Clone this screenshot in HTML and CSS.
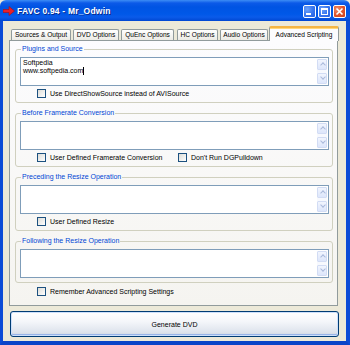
FILE: index.html
```html
<!DOCTYPE html>
<html lang="en">
<head>
  <meta charset="UTF-8">
  <title>FAVC 0.94 - Mr_Odwin</title>
  <link rel="stylesheet" href="styles.css">
</head>
<body>

  <div class="window">

    <!-- Title bar -->
    <div class="titlebar">
      <svg class="app-icon" width="12" height="10" viewBox="0 0 12 10">
        <path d="M0 3.5 H6 V0.5 L11.5 5 L6 9.5 V6.5 H0 Z" fill="#e8202a" stroke="#a80e14" stroke-width="0.6"/>
      </svg>
      <span class="title">FAVC 0.94 - Mr_Odwin</span>
      <div class="caption-buttons">
        <span class="cap cap-min"><i></i></span>
        <span class="cap cap-max"><i></i></span>
        <span class="cap cap-close">
          <svg width="9" height="9" viewBox="0 0 9 9"><path d="M1.5 1.5 L7.5 7.5 M7.5 1.5 L1.5 7.5" stroke="#fff" stroke-width="1.6"/></svg>
        </span>
      </div>
    </div>

    <div class="frame">

      <!-- Tabs -->
      <div class="tabs">
        <div class="tab t-sources">Sources &amp; Output</div>
        <div class="tab t-dvd">DVD Options</div>
        <div class="tab t-quenc">QuEnc Options</div>
        <div class="tab t-hc">HC Options</div>
        <div class="tab t-audio">Audio Options</div>
        <div class="tab active t-adv">Advanced Scripting</div>
      </div>

      <div class="panel">

        <fieldset class="group">
          <legend>Plugins and Source</legend>
          <div class="editbox">
            <div class="edit-text">Softpedia<br>www.softpedia.com<span class="caret"></span></div>
            <div class="vscroll"><span class="sb-btn up"></span><span class="sb-track"></span><span class="sb-btn down"></span></div>
          </div>
          <div class="check-row">
            <label class="check"><span class="box"></span>Use DirectShowSource instead of AVISource</label>
          </div>
        </fieldset>

        <fieldset class="group">
          <legend>Before Framerate Conversion</legend>
          <div class="editbox">
            <div class="edit-text"></div>
            <div class="vscroll"><span class="sb-btn up"></span><span class="sb-track"></span><span class="sb-btn down"></span></div>
          </div>
          <div class="check-row">
            <label class="check first"><span class="box"></span>User Defined Framerate Conversion</label>
            <label class="check"><span class="box"></span>Don't Run DGPulldown</label>
          </div>
        </fieldset>

        <fieldset class="group">
          <legend>Preceding the Resize Operation</legend>
          <div class="editbox">
            <div class="edit-text"></div>
            <div class="vscroll"><span class="sb-btn up"></span><span class="sb-track"></span><span class="sb-btn down"></span></div>
          </div>
          <div class="check-row">
            <label class="check"><span class="box"></span>User Defined Resize</label>
          </div>
        </fieldset>

        <fieldset class="group last">
          <legend>Following the Resize Operation</legend>
          <div class="editbox">
            <div class="edit-text"></div>
            <div class="vscroll"><span class="sb-btn up"></span><span class="sb-track"></span><span class="sb-btn down"></span></div>
          </div>
        </fieldset>

        <div class="check-row remember">
          <label class="check"><span class="box"></span>Remember Advanced Scripting Settings</label>
        </div>

      </div>

      <button class="generate">Generate DVD</button>

    </div>
  </div>

</body>
</html>
```
FILE: styles.css
```css
body {
  margin: 0;
  font-family: "Liberation Sans", Arial, sans-serif;
  font-size: 7px;
  color: #000;
  background: #ece9d8;
}
.window {
  width: 350px;
  height: 345px;
  display: flex;
  flex-direction: column;
  overflow: hidden;
}

/* Title bar */
.titlebar {
  height: 21px;
  flex: none;
  display: flex;
  align-items: center;
  padding-left: 3px;
  background: linear-gradient(to bottom, #3d8df5 0, #0c5ae8 3px, #0054e3 7px, #0058e8 14px, #0a5bea 17px, #0047d2 21px);
  border-radius: 6px 6px 0 0;
}
.app-icon {
  margin-right: 2px;
  margin-top: 1px;
}
.title {
  color: #fff;
  font-size: 8.5px;
  font-weight: bold;
  letter-spacing: 0.2px;
  text-shadow: 1px 1px 0 #0a2a8c;
}
.caption-buttons {
  margin-left: auto;
  margin-right: 4px;
  display: flex;
  gap: 2px;
  margin-top: 1px;
}
.cap {
  width: 11px;
  height: 11px;
  border: 1px solid #fff;
  border-radius: 2px;
  display: flex;
  align-items: center;
  justify-content: center;
  position: relative;
  background: radial-gradient(circle at 30% 30%, #6fa4fa 0, #3a78f0 50%, #255fe0 100%);
}
.cap-min i {
  display: block;
  width: 5px;
  height: 2px;
  background: #fff;
  margin-top: 5px;
  margin-right: 2px;
}
.cap-max i {
  display: block;
  width: 5px;
  height: 4px;
  border: 1px solid #fff;
  border-top-width: 2px;
}
.cap-close {
  background: radial-gradient(circle at 30% 30%, #f0906c 0, #e0562e 50%, #c8401c 100%);
}

/* Frame */
.frame {
  flex: 1;
  border-left: 3px solid #0b4bd6;
  border-right: 4px solid #0b4bd6;
  border-bottom: 4px solid #0a44c8;
  background: #ece9d8;
  padding-top: 6px;
}

/* Tabs */
.tabs {
  height: 13px;
  display: flex;
  align-items: flex-end;
  margin-left: 8px;
  position: relative;
  z-index: 1;
}
.tab {
  height: 10px;
  line-height: 10px;
  border: 1px solid #919b9c;
  border-bottom: none;
  border-radius: 2px 2px 0 0;
  background: linear-gradient(to bottom, #fff, #ecebe5);
  text-align: center;
  white-space: nowrap;
  font-size: 6.6px;
  box-sizing: content-box;
}
.t-sources { width: 58px; margin-right: 2px; }
.t-dvd { width: 44px; margin-right: 2px; }
.t-quenc { width: 51px; margin-right: 3px; }
.t-hc { width: 39px; margin-right: 2px; }
.t-audio { width: 46px; margin-right: 1px; }
.tab.active {
  width: 68px;
  height: 13px;
  line-height: 13px;
  margin-bottom: -1px;
  background: #fcfcfe;
  border-top: 2px solid #f5b544;
  box-shadow: inset 0 1px 0 #ffd77a;
}

/* Tab page */
.panel {
  width: 327px;
  height: 261px;
  margin-left: 6px;
  border: 1px solid #919b9c;
  background: linear-gradient(to bottom, #fcfcfe, #f5f4f0);
  padding: 3px 4px 0 5px;
  box-sizing: content-box;
  display: flex;
  flex-direction: column;
  gap: 5px;
  width: 318px;
}
.group {
  margin: 0;
  padding: 3px 3px 2px 4px;
  border: 1px solid #d0d0bf;
  border-radius: 3px;
  min-width: 0;
}
.group legend {
  color: #0046d5;
  padding: 0 1px;
  margin-left: 1px;
  line-height: 10px;
  font-size: 7px;
}
.group.last {
  padding-bottom: 4px;
}

/* Multiline edit box */
.editbox {
  height: 27px;
  border: 1px solid #7f9db9;
  background: #fff;
  display: flex;
}
.edit-text {
  flex: 1;
  padding: 1px 2px;
  line-height: 8px;
  font-size: 7px;
}
.caret {
  display: inline-block;
  width: 1px;
  height: 8px;
  background: #000;
  vertical-align: top;
}
.vscroll {
  width: 10px;
  padding: 1px 1px 1px 0;
  display: flex;
  flex-direction: column;
}
.sb-track {
  flex: 1;
  background: #f7f9fe;
}
.sb-btn {
  height: 9px;
  border: 1px solid #d2dcf4;
  border-radius: 1px;
  background: linear-gradient(to bottom, #f1f5fe, #dde6fb);
  position: relative;
}
.sb-btn::after {
  content: "";
  position: absolute;
  left: 3px;
  width: 3px;
  height: 3px;
  border-left: 1px solid #a9b9db;
  border-top: 1px solid #a9b9db;
}
.sb-btn.up::after {
  top: 3px;
  transform: rotate(45deg);
}
.sb-btn.down::after {
  top: 1px;
  transform: rotate(-135deg);
}

/* Checkboxes */
.check-row {
  height: 14px;
  display: flex;
  align-items: center;
  padding-left: 17px;
}
.check {
  display: flex;
  align-items: center;
  white-space: nowrap;
}
.check.first {
  width: 141px;
}
.box {
  width: 7px;
  height: 7px;
  border: 1px solid #1c5180;
  background: linear-gradient(135deg, #dcdcd7, #fff);
  margin-right: 4px;
}
.remember {
  padding-left: 22px;
  margin-top: -4px;
}

/* Button */
.generate {
  display: block;
  width: 329px;
  height: 26px;
  margin: 5px 0 0 7px;
  border: 1px solid #003c74;
  border-radius: 3px;
  background: linear-gradient(to bottom, #fff 0, #f4f6fa 40%, #dde3ec 85%, #c9d2df 100%);
  box-shadow: inset 0 0 0 1px #cde0fb, inset 0 -1px 0 1px #98b4e8;
  font-family: "Liberation Sans", Arial, sans-serif;
  font-size: 7px;
  color: #000;
  padding: 0;
}
```
